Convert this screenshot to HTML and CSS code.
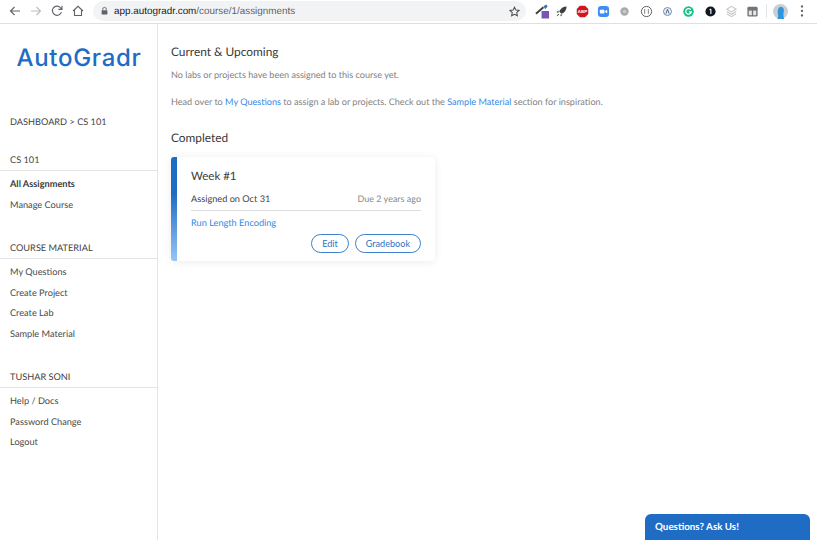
FILE: index.html
```html
<!DOCTYPE html>
<html lang="en">
<head>
<meta charset="utf-8">
<title>AutoGradr</title>
<link rel="stylesheet" href="styles.css">
</head>
<body>
<header class="browser">
  <div class="nav-icons">
    <svg class="nav" viewBox="0 0 14 14"><path d="M12 7H2.500M6.500 3 2.500 7l4 4" fill="none" stroke="#5f6368" stroke-width="1.100"/></svg>
    <svg class="nav" viewBox="0 0 14 14"><path d="M2 7h9.500M7.500 3l4 4-4 4" fill="none" stroke="#b9bcc0" stroke-width="1.100"/></svg>
    <svg class="nav" viewBox="0 0 14 14"><path d="M11.400 8.200A4.600 4.600 0 1 1 10.400 3.600L12 5.200M12 1.800v3.600H8.400" fill="none" stroke="#5f6368" stroke-width="1.100"/></svg>
    <svg class="nav" viewBox="0 0 14 14"><path d="M2 7 7 2.300 12 7M3.500 6v5.500h7V6" fill="none" stroke="#5f6368" stroke-width="1.100"/></svg>
  </div>
  <div class="omnibox">
    <svg class="lock" viewBox="0 0 10 10"><path d="M3 4.500V3a2 2 0 0 1 4 0v1.500" fill="none" stroke="#5f6368"/><rect x="1.800" y="4.300" width="6.400" height="4.700" rx=".8" fill="#5f6368"/></svg>
    <span class="url"><b>app.autogradr.com</b>/course/1/assignments</span>
    <svg class="star" viewBox="0 0 14 14"><path d="m7 2.300 1.500 3.200 3.400.4-2.500 2.300.7 3.400L7 10l-3.100 1.600.7-3.400-2.500-2.300 3.400-.4z" fill="none" stroke="#4a4d50" stroke-width="1.100"/></svg>
  </div>
  <div class="extensions">
    <svg class="ext ext-wide" viewBox="0 0 16 16"><path d="M1 11 9 4" stroke="#3c4043" stroke-width="2"/><path d="M9 3l3-2 1.500 2-2.500 3z" fill="#3c6fb0"/><rect x="7" y="8" width="8" height="8" fill="#7a55b8"/></svg>
    <svg class="ext" viewBox="0 0 14 14"><path d="M12.500 1.500C9 1.500 6 3.500 4.500 7L7 9.500C10.500 8 12.500 5 12.500 1.500ZM4 6 1.500 7.500 3.500 8.500ZM8 10l-1.500 2.500L5.500 10.500ZM3.500 9.500 1.500 12.500 4.500 10.500Z" fill="#3c4043"/></svg>
    <svg class="ext" viewBox="0 0 14 14"><path d="M4.200 .8h5.600L13.200 4.200v5.600L9.800 13.200H4.200L.8 9.800V4.200Z" fill="#d3151d"/><text class="abp" x="7" y="9">ABP</text></svg>
    <svg class="ext" viewBox="0 0 14 14"><rect x="1" y="1" width="12" height="12" rx="3.500" fill="#3d8df5"/><rect x="3" y="5" width="5" height="4.200" rx="1" fill="#fff"/><path d="m8.800 6.500 2.200-1.500v4L8.800 7.700Z" fill="#fff"/></svg>
    <svg class="ext" viewBox="0 0 14 14"><circle cx="7" cy="7" r="4.500" fill="#aaa"/><circle cx="7" cy="7" r="2" fill="#c8c8c8"/></svg>
    <svg class="ext" viewBox="0 0 14 14"><circle cx="7" cy="7" r="5.500" fill="#fff" stroke="#555" stroke-width="1"/><path d="M5 4.500v5M9 4.500v5" stroke="#777"/></svg>
    <svg class="ext" viewBox="0 0 14 14"><circle cx="7" cy="7" r="4.300" fill="#eef2f7" stroke="#6d84a3"/><path d="M5.300 9.300 7 4.500l1.700 4.800" fill="none" stroke="#3f5d85"/></svg>
    <svg class="ext" viewBox="0 0 14 14"><circle cx="7" cy="7" r="5.600" fill="#13bf8a"/><path d="M9.400 5A3 3 0 1 0 10 7.500H7.500" fill="none" stroke="#fff" stroke-width="1.400"/></svg>
    <svg class="ext" viewBox="0 0 14 14"><circle cx="7" cy="7" r="5.500" fill="#111822"/><path d="M7.400 4.200v5.600M6 5.200l1.400-1" stroke="#fff" stroke-width="1.200" fill="none"/></svg>
    <svg class="ext" viewBox="0 0 14 14"><path d="m7 1.500 5 3-5 3-5-3ZM2 7l5 3 5-3M2 9.500l5 3 5-3" fill="none" stroke="#c5c8c8" stroke-width="1.200"/></svg>
    <svg class="ext" viewBox="0 0 14 14"><rect x="1.500" y="2" width="11" height="10.500" rx="1.500" fill="#70757a"/><rect x="3" y="6" width="3.300" height="5" fill="#e6e6e6"/><rect x="7.700" y="6" width="3.300" height="5" fill="#e6e6e6"/></svg>
    <span class="divider"></span>
    <svg class="avatar" viewBox="0 0 16 16"><circle cx="8" cy="8" r="8" fill="#c9ced2"/><path d="M4.500 16c1-1.500 1.200-3 .8-5C4.600 7.500 5.500 3 8.500 3c2.500 0 3.500 2.500 3 5-.4 2-.7 4 .3 8Z" fill="#2f95dc"/></svg>
    <svg class="menu" viewBox="0 0 4 14"><circle cx="2" cy="2.500" r="1.150" fill="#5f6368"/><circle cx="2" cy="7" r="1.150" fill="#5f6368"/><circle cx="2" cy="11.500" r="1.150" fill="#5f6368"/></svg>
  </div>
</header>

<div class="app">
  <aside class="sidebar">
    <div class="logo">AutoGradr</div>
    <div class="crumb">DASHBOARD &gt; CS 101</div>
    <section class="menu-group">
      <h3>CS 101</h3>
      <a class="item active">All Assignments</a>
      <a class="item">Manage Course</a>
    </section>
    <section class="menu-group">
      <h3>COURSE MATERIAL</h3>
      <a class="item">My Questions</a>
      <a class="item">Create Project</a>
      <a class="item">Create Lab</a>
      <a class="item">Sample Material</a>
    </section>
    <section class="menu-group">
      <h3>TUSHAR SONI</h3>
      <a class="item">Help / Docs</a>
      <a class="item">Password Change</a>
      <a class="item">Logout</a>
    </section>
  </aside>

  <main class="content">
    <h2 class="heading">Current &amp; Upcoming</h2>
    <p class="muted first">No labs or projects have been assigned to this course yet.</p>
    <p class="muted second">Head over to <a class="link">My Questions</a> to assign a lab or projects. Check out the <a class="link">Sample Material</a> section for inspiration.</p>
    <h2 class="heading completed">Completed</h2>
    <article class="card">
      <div class="card-bar"></div>
      <div class="card-body">
        <h4 class="card-title">Week #1</h4>
        <div class="card-meta"><span>Assigned on Oct 31</span><span class="due">Due 2 years ago</span></div>
        <a class="link card-link">Run Length Encoding</a>
        <div class="card-actions">
          <button class="pill">Edit</button>
          <button class="pill">Gradebook</button>
        </div>
      </div>
    </article>
  </main>
</div>

<div class="chat">Questions? Ask Us!</div>
</body>
</html>
```
FILE: styles.css
```css
* { box-sizing: border-box; }
html, body { margin: 0; height: 100%; overflow: hidden; }
body {
  width: 817px;
  height: 540px;
  background: #fff;
  color: #3a3a3a;
  font-family: Lato, "Liberation Sans", sans-serif;
  text-rendering: geometricPrecision;
  display: flex;
  flex-direction: column;
}

.browser {
  flex: none;
  height: 24px;
  display: flex;
  align-items: center;
  padding: 0 0 1px 8px;
  border-bottom: 1px solid #dedfe1;
  background: #fff;
}
.nav-icons { display: flex; gap: 7px; width: 85px; flex: none; align-items: center; }
.nav { width: 14px; height: 14px; flex: none; }
.omnibox {
  flex: none;
  width: 433px;
  height: 20px;
  border-radius: 10px;
  background: #f1f3f4;
  display: flex;
  align-items: center;
  padding: 0 5.500px 0 7px;
}
.lock { width: 9px; height: 10px; margin-right: 5px; flex: none; }
.url {
  flex: 1;
  font-family: "Liberation Sans", Arial, sans-serif;
  font-size: 9.900px;
  color: #5f6368;
}
.url b { font-weight: 400; color: #202124; }
.star { width: 13px; height: 13px; flex: none; }
.extensions { display: flex; align-items: center; margin-left: 8.500px; flex: none; }
.ext { width: 13px; height: 13px; margin-right: 8.300px; flex: none; }
.ext-wide { width: 15px; height: 16px; margin-right: 5px; }
.abp {
  fill: #fff;
  font-family: "Liberation Sans", sans-serif;
  font-size: 4.800px;
  font-weight: 700;
  text-anchor: middle;
}
.divider { width: 1px; height: 14px; background: #e3e4e6; margin: 0 6px 0 -1px; flex: none; }
.avatar { width: 15px; height: 15px; margin-right: 12px; flex: none; }
.menu { width: 4px; height: 14px; flex: none; }

.app { flex: 1; display: flex; min-height: 0; }
.sidebar {
  width: 158px;
  flex: none;
  border-right: 1px solid #e4e4e4;
  font-size: 9.200px;
}
.logo {
  font-family: Inter, "Open Sans", sans-serif;
  font-size: 24px;
  font-weight: 500;
  color: #1f6cc4;
  line-height: 30px;
  letter-spacing: .7px;
  padding: 19px 0 0 16.500px;
  height: 49px;
}
.crumb { margin-top: 41px; padding-left: 10px; line-height: 16px; color: #444; }
.menu-group + .menu-group { margin-top: 25px; }
.crumb + .menu-group { margin-top: 22px; }
.menu-group h3 {
  margin: 0 0 3px;
  font-size: 9.200px;
  font-weight: 400;
  line-height: 16px;
  padding: 0 0 2px 10px;
  height: 19px;
  border-bottom: 1px solid #e4e4e4;
  color: #444;
}
.item {
  display: block;
  height: 20.500px;
  line-height: 20.500px;
  padding-left: 10px;
  color: #4a4a4a;
}
.item.active { font-weight: 700; color: #3a3a3a; }

.content { flex: 1; padding: 0 0 0 13px; font-size: 9.200px; }
.heading {
  margin: 19px 0 0;
  font-size: 11.900px;
  font-weight: 400;
  line-height: 17px;
  color: #3a3a3a;
}
.muted { margin: 0; font-size: 9.100px; line-height: 16px; color: #828282; }
.first { margin-top: 7px; }
.second { margin-top: 11px; }
.link { color: #3488e6; }
.completed { margin-top: 19px; }
.card {
  margin-top: 11px;
  width: 264px;
  height: 104px;
  display: flex;
  border-radius: 4px;
  background: #fff;
  box-shadow: 0 1px 8px rgba(0, 0, 0, .08);
}
.card-bar {
  width: 6px;
  border-radius: 3px 0 0 3px;
  background: linear-gradient(#1f6cc4, #1f6cc4 35%, #97c4f5);
}
.card-body { flex: 1; padding: 11px 14px 0 14px; }
.card-title { margin: 0; font-size: 11.500px; font-weight: 400; line-height: 17px; color: #3a3a3a; }
.card-meta {
  display: flex;
  justify-content: space-between;
  margin-top: 6px;
  height: 20px;
  line-height: 16px;
  border-bottom: 1px solid #dedede;
  color: #444;
}
.due { color: #8a8a8a; font-size: 9px; }
.card-link { display: block; margin-top: 4px; line-height: 16px; }
.card-actions { display: flex; justify-content: flex-end; gap: 6px; margin-top: 3px; }
.pill {
  height: 19px;
  padding: 0 10px;
  border: 1px solid #3f80cd;
  border-radius: 10px;
  background: #fff;
  color: #2b73c6;
  font-family: inherit;
  font-size: 9.100px;
}

.chat {
  position: absolute;
  left: 645px;
  top: 514px;
  width: 165px;
  height: 26px;
  padding: 6px 0 0 10px;
  background: #1f6cc4;
  border-radius: 6px 6px 0 0;
  color: #fff;
  font-size: 9.800px;
  font-weight: 700;
  line-height: 15px;
}
```
